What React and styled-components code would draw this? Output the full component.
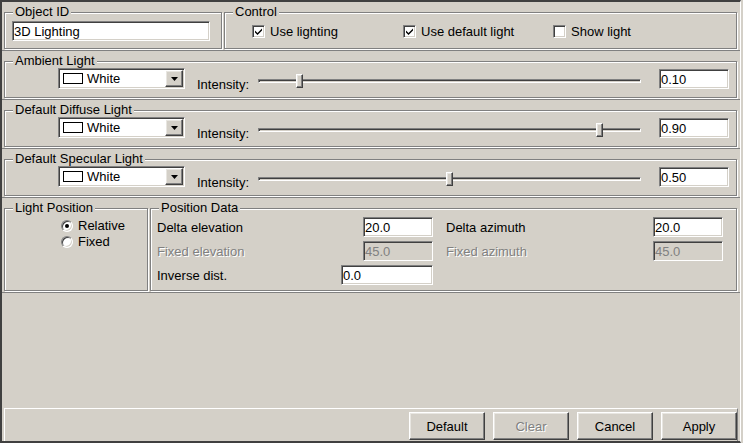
import React from "react";
import styled, { createGlobalStyle } from "styled-components";

const GlobalStyle = createGlobalStyle`
  html, body {
    margin: 0;
    padding: 0;
    background: #d4d0c8;
  }
  body {
    font-family: "Liberation Sans", Arial, sans-serif;
    font-size: 13px;
    color: #000;
  }
  * {
    box-sizing: border-box;
  }
`;

const Window = styled.div`
  width: 741px;
  height: 443px;
  display: flex;
  flex-direction: column;
  background: #d4d0c8;
  border-style: solid;
  border-width: 2px 1px 2px 2px;
  border-color: #404040 #fff #404040 #404040;
`;

const Row = styled.div`
  display: flex;
  gap: 2px;
  padding: 3px 3px 1px 2px;
  border-bottom: 1px solid #808080;
`;

const Group = styled.fieldset`
  margin: 0;
  padding: 0;
  min-width: 0;
  border: 1px solid #808080;
  box-shadow: inset 1px 1px 0 #fff, 1px 1px 0 #fff;
  width: ${(p) => (p.$w ? `${p.$w}px` : "auto")};
  flex: ${(p) => (p.$w ? "none" : "1")};
`;

const Legend = styled.legend`
  margin-left: 8px;
  padding: 0 2px;
  line-height: 14px;
  background: #d4d0c8;
`;

const sunken = `
  border: 1px solid;
  border-color: #808080 #fff #fff #808080;
  box-shadow: inset 1px 1px 0 #404040, inset -1px -1px 0 #d4d0c8;
`;

const raised = `
  border: 1px solid;
  border-color: #fff #404040 #404040 #fff;
  box-shadow: inset -1px -1px 0 #808080, inset 1px 1px 0 #e8e6e1;
`;

const Field = styled.input`
  ${sunken}
  width: ${(p) => p.$w || 70}px;
  height: 20px;
  margin: 0;
  margin-top: ${(p) => p.$mt || 0}px;
  margin-left: ${(p) => p.$ml || 0}px;
  padding: 0 1px;
  font: inherit;
  line-height: 16px;
  color: #000;
  background: #fff;
  outline: none;
  flex: none;
  &:disabled {
    background: #d4d0c8;
    color: #808080;
  }
`;

/* header row */
const IdBody = styled.div`
  height: 29px;
  padding: 2px 0 0 7px;
`;

const ControlBody = styled.div`
  height: 29px;
  display: grid;
  grid-template-columns: 151px 150px auto;
  padding: 5px 0 0 27px;
  align-items: start;
`;

const Check = styled.label`
  display: flex;
  align-items: center;
  gap: 5px;
  line-height: 15px;
`;

const Box = styled.span`
  ${sunken}
  width: 13px;
  height: 13px;
  background: #fff;
  display: flex;
  align-items: center;
  justify-content: center;
  flex: none;
`;

const CheckBox = ({ checked, children }) => (
  <Check>
    <Box>
      {checked && (
        <svg width="9" height="9" viewBox="0 0 9 9">
          <path d="M1 3.5 L3.5 6 L8 1.5 L8 3.5 L3.5 8 L1 5.5 Z" fill="#000" />
        </svg>
      )}
    </Box>
    {children}
  </Check>
);

/* light rows */
const LightBody = styled.div`
  height: 29px;
  display: flex;
  align-items: flex-start;
  padding-left: 53px;
`;

const Combo = styled.div`
  ${sunken}
  width: 127px;
  height: 21px;
  display: flex;
  align-items: center;
  padding: 1px;
  background: #fff;
  flex: none;
`;

const Swatch = styled.span`
  width: 20px;
  height: 11px;
  margin-left: 3px;
  border: 1px solid #000;
  background: ${(p) => p.$color};
`;

const ComboText = styled.span`
  flex: 1;
  margin-left: 4px;
  line-height: 15px;
`;

const DropBtn = styled.span`
  ${raised}
  width: 18px;
  height: 17px;
  background: #d4d0c8;
  display: flex;
  align-items: center;
  justify-content: center;
`;

const FieldLabel = styled.span`
  width: 61px;
  margin-left: 12px;
  margin-top: 9px;
  line-height: 15px;
  flex: none;
`;

const Slider = styled.div`
  position: relative;
  width: 383px;
  height: 14px;
  margin-top: 6px;
  flex: none;
`;

const Track = styled.div`
  ${sunken}
  height: 4px;
  margin-top: 5px;
  background: #d4d0c8;
`;

const Thumb = styled.div`
  ${raised}
  position: absolute;
  top: 0;
  width: 7px;
  height: 14px;
  background: #d4d0c8;
`;

const LightRow = ({ title, value }) => (
  <Row>
    <Group>
      <Legend>{title}</Legend>
      <LightBody>
        <Combo>
          <Swatch $color="#fff" />
          <ComboText>White</ComboText>
          <DropBtn>
            <svg width="7" height="4" viewBox="0 0 7 4">
              <polygon points="0,0 7,0 3.5,4" fill="#000" />
            </svg>
          </DropBtn>
        </Combo>
        <FieldLabel>Intensity:</FieldLabel>
        <Slider>
          <Track />
          <Thumb style={{ left: `${Math.round(value * 376)}px` }} />
        </Slider>
        <Field $ml={18} $mt={1} defaultValue={value.toFixed(2)} />
      </LightBody>
    </Group>
  </Row>
);

/* position row */
const RadioBody = styled.div`
  height: 75px;
  padding: 3px 0 0 56px;
`;

const RadioItem = styled.label`
  display: flex;
  align-items: center;
  gap: 5px;
  height: 16px;
  line-height: 16px;
`;

const RadioDot = styled.span`
  ${sunken}
  width: 12px;
  height: 12px;
  border-radius: 50%;
  background: #fff;
  display: flex;
  align-items: center;
  justify-content: center;
  &::after {
    content: "";
    width: 4px;
    height: 4px;
    border-radius: 50%;
    background: ${(p) => (p.$on ? "#000" : "transparent")};
  }
`;

const DataBody = styled.div`
  height: 75px;
  display: grid;
  grid-template-columns: 276px 277px;
  grid-auto-rows: 20px;
  column-gap: 13px;
  row-gap: 4px;
  padding: 2px 0 0 6px;
`;

const DataCell = styled.div`
  display: flex;
  align-items: center;
  justify-content: space-between;
`;

const DataLabel = styled.span`
  line-height: 15px;
  color: ${(p) => (p.$off ? "#808080" : "#000")};
  text-shadow: ${(p) => (p.$off ? "1px 1px 0 #fff" : "none")};
`;

const Spacer = styled.div`
  flex: 1;
`;

const ButtonBar = styled.div`
  height: 33px;
  margin: 0 2px;
  display: flex;
  justify-content: flex-end;
  align-items: flex-start;
  gap: 8px;
  padding-top: 3px;
  border-top: 1px solid #fff;
  border-left: 1px solid #fff;
  border-right: 1px solid #808080;
`;

const Button = styled.button`
  ${raised}
  width: 76px;
  height: 28px;
  padding: 0;
  font: inherit;
  color: #000;
  background: #d4d0c8;
  &:disabled {
    color: #808080;
    text-shadow: 1px 1px 0 #fff;
  }
`;

export default function App() {
  return (
    <>
      <GlobalStyle />
      <Window>
        <Row>
          <Group $w={218}>
            <Legend>Object ID</Legend>
            <IdBody>
              <Field $w={198} defaultValue="3D Lighting" />
            </IdBody>
          </Group>
          <Group>
            <Legend>Control</Legend>
            <ControlBody>
              <CheckBox checked>Use lighting</CheckBox>
              <CheckBox checked>Use default light</CheckBox>
              <CheckBox>Show light</CheckBox>
            </ControlBody>
          </Group>
        </Row>

        <LightRow title="Ambient Light" value={0.1} />
        <LightRow title="Default Diffuse Light" value={0.9} />
        <LightRow title="Default Specular Light" value={0.5} />

        <Row>
          <Group $w={144}>
            <Legend>Light Position</Legend>
            <RadioBody>
              <RadioItem>
                <RadioDot $on />
                Relative
              </RadioItem>
              <RadioItem>
                <RadioDot />
                Fixed
              </RadioItem>
            </RadioBody>
          </Group>
          <Group>
            <Legend>Position Data</Legend>
            <DataBody>
              <DataCell>
                <DataLabel>Delta elevation</DataLabel>
                <Field defaultValue="20.0" />
              </DataCell>
              <DataCell>
                <DataLabel>Delta azimuth</DataLabel>
                <Field defaultValue="20.0" />
              </DataCell>
              <DataCell>
                <DataLabel $off>Fixed elevation</DataLabel>
                <Field disabled defaultValue="45.0" />
              </DataCell>
              <DataCell>
                <DataLabel $off>Fixed azimuth</DataLabel>
                <Field disabled defaultValue="45.0" />
              </DataCell>
              <DataCell>
                <DataLabel>Inverse dist.</DataLabel>
                <Field $w={92} defaultValue="0.0" />
              </DataCell>
            </DataBody>
          </Group>
        </Row>

        <Spacer />

        <ButtonBar>
          <Button>Default</Button>
          <Button disabled>Clear</Button>
          <Button>Cancel</Button>
          <Button>Apply</Button>
        </ButtonBar>
      </Window>
    </>
  );
}
